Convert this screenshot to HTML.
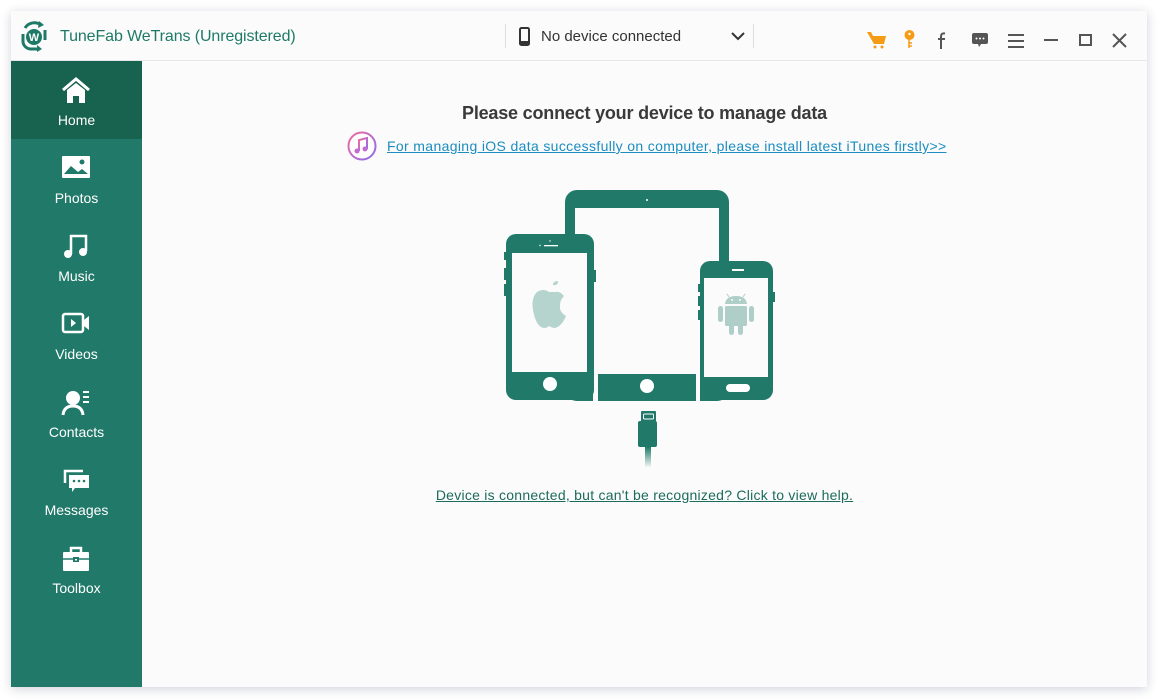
<!DOCTYPE html>
<html><head><meta charset="utf-8"><style>
*{margin:0;padding:0;box-sizing:border-box}
body{width:1160px;height:700px;background:#fff;position:relative;overflow:hidden;font-family:"Liberation Sans",sans-serif}
#win{position:absolute;left:11px;top:11px;width:1136px;height:676px;background:#fbfbfb;box-shadow:0 2px 10px rgba(40,50,80,.22)}
#tb{position:absolute;left:0;top:0;width:1136px;height:50px;border-bottom:1px solid #e6e6e6;background:#fbfbfb}
#title{position:absolute;left:49px;top:17px;font-size:16px;color:#1e7a66;letter-spacing:-0.1px}
#side{position:absolute;left:0;top:50px;width:131px;height:626px;background:#217a69}
.it{position:absolute;left:0;width:131px;height:78px;color:#fff;text-align:center;font-size:14px}
.it svg{position:absolute;left:50px;top:16px}
.it span{position:absolute;left:0;right:0;top:51px}
.h1{position:absolute;left:131px;width:1005px;top:92px;text-align:center;font-size:18px;font-weight:bold;color:#3a3a3a;letter-spacing:-0.2px}
a{text-decoration:underline}
</style></head><body>
<div id="win">
<div id="tb">
 <svg style="position:absolute;left:8px;top:9px" width="30" height="32" viewBox="0 0 30 32">
  <path d="M6 8 A11 11 0 0 1 22 5" fill="none" stroke="#1e7a66" stroke-width="3"/>
  <path d="M20 1 L25 5 L19 8Z" fill="#1e7a66"/>
  <path d="M4 14 L4 22 A8 8 0 0 0 12 29 L20 29" fill="none" stroke="#1e7a66" stroke-width="3"/>
  <path d="M26 10 L26 20" stroke="#1e7a66" stroke-width="3"/>
  <path d="M18 25 L23 29 L18 32Z" fill="#1e7a66"/>
  <circle cx="15" cy="17" r="8" fill="#1e7a66"/>
  <text x="15" y="21" font-size="11" font-weight="bold" fill="#fff" text-anchor="middle" font-family="Liberation Sans">W</text>
 </svg>
 <div id="title">TuneFab WeTrans (Unregistered)</div>
 <div style="position:absolute;left:494px;top:13px;width:1px;height:24px;background:#ddd"></div>
 <div style="position:absolute;left:742px;top:13px;width:1px;height:24px;background:#ddd"></div>
 <svg style="position:absolute;left:508px;top:16px" width="12" height="20"><rect x="1" y="1" width="9" height="17" rx="1.5" fill="none" stroke="#333" stroke-width="2"/><rect x="1" y="14" width="9" height="4" fill="#333"/></svg>
 <div style="position:absolute;left:530px;top:17px;font-size:15px;color:#333">No device connected</div>
 <svg style="position:absolute;left:720px;top:20px" width="14" height="10"><path d="M1 2 L7 8 L13 2" fill="none" stroke="#333" stroke-width="2"/></svg>
 <svg style="position:absolute;left:856px;top:20px" width="20" height="18"><path d="M0 1 L4 1 L6 5 L19 5 L17 13 L7 13Z" fill="#f59b16"/><circle cx="8" cy="16" r="1.5" fill="#f59b16"/><circle cx="15" cy="16" r="1.5" fill="#f59b16"/></svg>
 <svg style="position:absolute;left:893px;top:19px" width="12" height="20"><circle cx="5.5" cy="5" r="5" fill="#f59b16"/><circle cx="5.5" cy="4" r="1.2" fill="#fff"/><path d="M5 9 L5 18 M5 13 L8 13 M5 16 L8 16" stroke="#f59b16" stroke-width="1.5"/></svg>
 <svg style="position:absolute;left:926px;top:21px" width="10" height="18"><path d="M8 1.5 Q4 0.5 4 5 V17 M1 7 H8" fill="none" stroke="#555" stroke-width="2"/></svg>
 <svg style="position:absolute;left:961px;top:22px" width="16" height="15"><path d="M2 0 H14 Q16 0 16 2 V9 Q16 11 14 11 H9 L7 14 L6 11 H2 Q0 11 0 9 V2 Q0 0 2 0Z" fill="#555"/><circle cx="4.5" cy="5.5" r="1" fill="#fff"/><circle cx="8" cy="5.5" r="1" fill="#fff"/><circle cx="11.5" cy="5.5" r="1" fill="#fff"/></svg>
 <svg style="position:absolute;left:997px;top:23px" width="16" height="14"><path d="M0 1H16M0 7H16M0 13H16" stroke="#555" stroke-width="2"/></svg>
 <svg style="position:absolute;left:1033px;top:28px" width="14" height="3"><path d="M0 1H14" stroke="#555" stroke-width="2"/></svg>
 <svg style="position:absolute;left:1068px;top:23px" width="13" height="12"><rect x="1" y="1" width="11" height="10" fill="none" stroke="#555" stroke-width="2"/></svg>
 <svg style="position:absolute;left:1101px;top:22px" width="15" height="15"><path d="M1 1L14 14M14 1L1 14" stroke="#555" stroke-width="2"/></svg>
</div>
<div id="side">
 <div class="it" style="top:0;background:#17634f">
  <svg width="30" height="28" viewBox="0 0 30 28"><path d="M2 13 L15 2 L28 13" fill="none" stroke="#fff" stroke-width="3"/><path d="M6 13 L15 6 L24 13 V26 H18 V19 H12 V26 H6Z" fill="#fff"/></svg><span>Home</span></div>
 <div class="it" style="top:78px">
  <svg width="30" height="26" viewBox="0 0 30 26"><rect x="1" y="1" width="28" height="22" rx="1" fill="#fff"/><path d="M3 19 L10 11 L17 17 L21 14 L27 19Z" fill="#217a69"/><circle cx="21" cy="7" r="2.5" fill="#217a69"/></svg><span>Photos</span></div>
 <div class="it" style="top:156px">
  <svg width="30" height="28" viewBox="0 0 30 28"><path d="M10 21 V3 H25 V18" fill="none" stroke="#fff" stroke-width="2.5"/><circle cx="7" cy="21" r="4" fill="#fff"/><circle cx="22" cy="19" r="4" fill="#fff"/></svg><span>Music</span></div>
 <div class="it" style="top:234px">
  <svg width="30" height="26" viewBox="0 0 30 26"><rect x="2" y="3" width="20" height="18" rx="2" fill="none" stroke="#fff" stroke-width="2.5"/><path d="M10 8 L15 12 L10 16Z" fill="#fff"/><path d="M23 9 L28 5 V19 L23 15Z" fill="#fff"/></svg><span>Videos</span></div>
 <div class="it" style="top:312px">
  <svg width="30" height="28" viewBox="0 0 30 28"><circle cx="12" cy="9" r="7" fill="#fff"/><path d="M2 26 Q3 17 12 17 Q21 17 22 26" fill="none" stroke="#fff" stroke-width="3"/><path d="M22 3H28M22 8H28M22 13H28" stroke="#fff" stroke-width="2"/></svg><span>Contacts</span></div>
 <div class="it" style="top:390px">
  <svg width="30" height="28" viewBox="0 0 30 28"><path d="M4 16 V4 H22" fill="none" stroke="#fff" stroke-width="2.5"/><path d="M8 8 H28 V21 H14 L11 25 L11 21 H8Z" fill="#fff"/><circle cx="13" cy="14" r="1.3" fill="#217a69"/><circle cx="18" cy="14" r="1.3" fill="#217a69"/><circle cx="23" cy="14" r="1.3" fill="#217a69"/></svg><span>Messages</span></div>
 <div class="it" style="top:468px">
  <svg width="30" height="28" viewBox="0 0 30 28"><path d="M10 7 V3 H20 V7" fill="none" stroke="#fff" stroke-width="2.5"/><rect x="2" y="7" width="26" height="19" rx="1" fill="#fff"/><path d="M2 14H28" stroke="#217a69" stroke-width="1.5"/><rect x="12" y="12" width="6" height="5" fill="#217a69"/><rect x="14" y="14" width="2" height="1.5" fill="#fff"/></svg><span>Toolbox</span></div>
</div>
<div class="h1">Please connect your device to manage data</div>
<svg style="position:absolute;left:336px;top:120px" width="30" height="30" viewBox="0 0 30 30"><defs><linearGradient id="ig" x1="0" y1="0" x2="1" y2="1"><stop offset="0" stop-color="#f36b9a"/><stop offset="1" stop-color="#8a6cf0"/></linearGradient></defs><circle cx="15" cy="15" r="13.5" fill="#fff" stroke="url(#ig)" stroke-width="2"/><path d="M12 20 V9 L20 7 V18" fill="none" stroke="url(#ig)" stroke-width="2"/><circle cx="10" cy="20" r="2.5" fill="#c56ad0"/><circle cx="18" cy="18" r="2.5" fill="#c56ad0"/></svg>
<a style="position:absolute;left:376px;top:127px;font-size:14px;color:#1b8dc0;white-space:nowrap;letter-spacing:0.35px">For managing iOS data successfully on computer, please install latest iTunes firstly&gt;&gt;</a>
<svg style="position:absolute;left:468px;top:156px" width="300" height="300" viewBox="479 167 300 300">
 <defs><linearGradient id="cg" x1="0" y1="0" x2="0" y2="1"><stop offset="0" stop-color="#217a69"/><stop offset="1" stop-color="#217a69" stop-opacity="0"/></linearGradient></defs>
 <rect x="565" y="190" width="164" height="211" rx="12" fill="#217a69"/>
 <rect x="575" y="208" width="144" height="166" fill="#fbfbfb"/>
 <circle cx="647" cy="200" r="1" fill="#fff"/>
 <circle cx="647" cy="386" r="7" fill="#fff"/>
 <rect x="593" y="232" width="5" height="171" fill="#fbfbfb"/>
 <rect x="696" y="258" width="4" height="145" fill="#fbfbfb"/>
 <rect x="506" y="234" width="88" height="166" rx="10" fill="#217a69"/>
 <rect x="504" y="252" width="2" height="8" fill="#217a69"/><rect x="504" y="268" width="2" height="12" fill="#217a69"/><rect x="504" y="284" width="2" height="12" fill="#217a69"/><rect x="594" y="270" width="2" height="12" fill="#217a69"/>
 <rect x="512" y="253" width="75" height="119" fill="#fbfbfb"/>
 <rect x="544" y="245" width="14" height="1.3" fill="#fff"/><circle cx="540" cy="245.5" r=".7" fill="#fff"/><circle cx="550" cy="241" r=".7" fill="#fff"/>
 <circle cx="550" cy="384" r="7" fill="#fff"/>
 <path d="M553 285 Q558 286 558 281 Q553 281 553 285Z M549 292 Q543 288 537 292 Q531 298 533 310 Q536 327 544 328 Q547 328 549 326 Q552 328 555 328 Q562 326 566 316 Q559 312 560 305 Q560 300 564 296 Q560 291 556 292 Q553 292 549 292Z" fill="#b4d4cd"/>
 <rect x="700" y="261" width="73" height="139" rx="10" fill="#217a69"/>
 <rect x="698" y="284" width="2" height="8" fill="#217a69"/><rect x="698" y="296" width="2" height="10" fill="#217a69"/><rect x="698" y="310" width="2" height="10" fill="#217a69"/><rect x="773" y="292" width="2" height="10" fill="#217a69"/>
 <rect x="704" y="278" width="64" height="99" fill="#fbfbfb"/>
 <rect x="732" y="269" width="12" height="2" fill="#fff"/>
 <rect x="726" y="384" width="24" height="8" rx="4" fill="#fff"/>
 <path d="M725 304 Q726 296 736 296 Q746 296 747 304Z" fill="#aecec7"/>
 <path d="M729 297 L727 294 M743 297 L745 294" stroke="#aecec7" stroke-width="1"/>
 <circle cx="732" cy="300" r="1" fill="#fbfbfb"/><circle cx="740" cy="300" r="1" fill="#fbfbfb"/>
 <rect x="725" y="306" width="22" height="20" rx="1.5" fill="#aecec7"/>
 <rect x="718" y="306" width="5" height="16" rx="2.5" fill="#aecec7"/><rect x="749" y="306" width="5" height="16" rx="2.5" fill="#aecec7"/>
 <rect x="729" y="323" width="5" height="12" rx="2.5" fill="#aecec7"/><rect x="738" y="323" width="5" height="12" rx="2.5" fill="#aecec7"/>
 <rect x="641" y="411" width="15" height="11" rx="1" fill="#217a69"/>
 <rect x="643.5" y="414" width="10" height="5" rx="1" fill="none" stroke="#fff" stroke-width="1"/>
 <rect x="638" y="421" width="19" height="26" rx="2" fill="#217a69"/>
 <rect x="645" y="447" width="6" height="21" fill="url(#cg)"/>
</svg>
<a style="position:absolute;left:131px;width:1005px;text-align:center;top:476px;font-size:14px;color:#1c6b5b;letter-spacing:0.25px">Device is connected, but can't be recognized? Click to view help.</a>
</div>
</body></html>
